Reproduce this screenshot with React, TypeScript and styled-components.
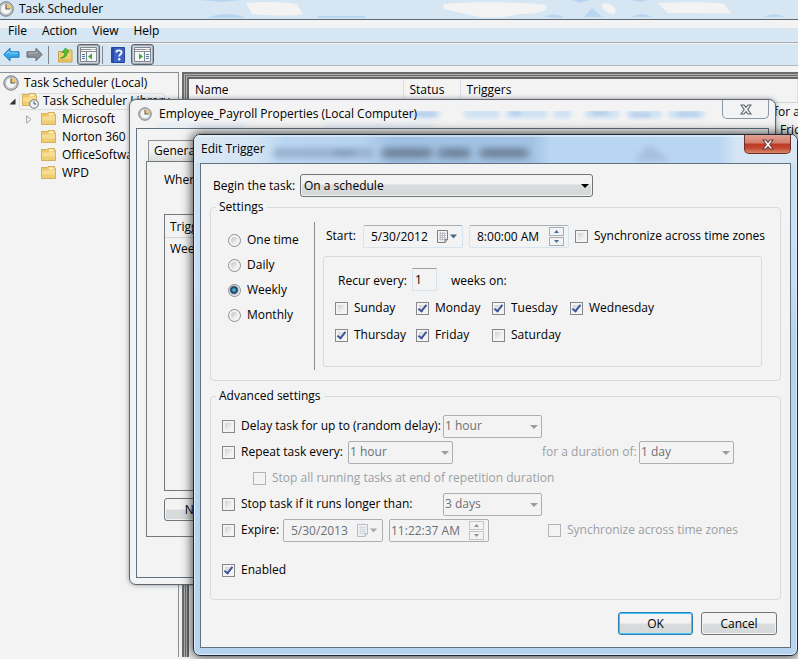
import React, { useState } from 'react';
import styled, { createGlobalStyle, css } from 'styled-components';

const Global = createGlobalStyle`
  *, *::before, *::after { box-sizing: border-box; }
  html, body { margin: 0; padding: 0; overflow: hidden; background: #f3f3f3; }
  body, button, input, select, table {
    font-family: "Open Sans", "Noto Sans", sans-serif;
    font-size: 12px;
    line-height: 18px;
    color: #000;
  }
`;

/* ---------- main window ---------- */

const Desktop = styled.main`
  position: relative;
  display: flex;
  flex-direction: column;
  min-height: 100vh;
  padding-bottom: 2px;
  overflow: hidden;
  background: #f3f3f3;
  white-space: nowrap;
`;

const TitleBar = styled.header`
  position: relative;
  display: flex;
  align-items: center;
  height: 20px;
  padding-bottom: 2px;
  gap: 5px;
  background: #d6e6f3;
  border-bottom: 1px solid #5d6a75;
`;

const Backdrop = styled.svg`
  position: absolute;
  inset: 0;
  width: 100%;
  height: 100%;
`;

const WindowName = styled.h1`
  position: relative;
  margin: 0;
  font-size: 12px;
  font-weight: 400;
`;

const AppMark = styled.span`
  position: relative;
  display: flex;
  margin-left: -2px;
`;

const MenuBar = styled.nav`
  display: flex;
  height: 23px;
  padding-left: 8px;
  gap: 15px;
  background: linear-gradient(#f3f3f3 8px, #d6e6f3 8px);
  border-bottom: 1px solid #a7abb0;
`;

const MenuItem = styled.button`
  padding: 0;
  border: 0;
  background: none;
`;

const ToolBar = styled.div`
  display: flex;
  align-items: center;
  height: 23px;
  padding-left: 3px;
  border-top: 1px solid #f3f3f3;
  border-bottom: 1px solid #b3b8bf;
  background: #d6e6f3;
`;

const ToolButton = styled.button<{ $on?: boolean; $gap?: number }>`
  display: flex;
  align-items: center;
  justify-content: center;
  height: 21px;
  padding: 0;
  margin-left: ${p => p.$gap ?? 0}px;
  border: 0;
  background: none;
  ${p => p.$on && css`
    width: 23px;
    border: 1px solid #5b6573;
    border-radius: 3px;
    background: #d4d9dd;
    box-shadow: inset 0 0 0 1px #a3a9b3;
  `}
`;

const ToolRule = styled.span<{ $gap: number }>`
  width: 1px;
  height: 18px;
  margin-left: ${p => p.$gap}px;
  background: #7f868e;
`;

const Workspace = styled.div`
  display: flex;
  flex: 1;
  gap: 3px;
  padding-top: 6px;
`;

const TreePane = styled.aside`
  flex: 0 0 179px;
  overflow: hidden;
  border-top: 1px solid #8a8f94;
  border-right: 1px solid #8a8f94;
`;

const Tree = styled.ul`
  margin: 0;
  padding: 1px 0 0;
  list-style: none;
`;

const Twisty = styled.span`
  display: flex;
  flex: 0 0 12px;
  justify-content: center;
`;

const TreeRow = styled.li<{ $depth: number }>`
  display: flex;
  align-items: center;
  height: 18px;
  gap: ${p => (p.$depth === 2 ? 6 : 5)}px;
  padding-left: ${p => [3, 6, 23][p.$depth]}px;
  svg { flex: none; }
`;

const TreePick = styled.span`
  display: flex;
  align-items: center;
  height: 17px;
  width: 146px;
  margin-left: -4px;
  padding-left: 2px;
  gap: 4px;
  border: 1px solid #dcdfe2;
  border-radius: 3px;
`;

const ListPane = styled.section`
  flex: 1;
  min-width: 0;
  border-style: solid;
  border-color: #6b6b6b;
  border-width: 2px 0 0 2px;
  box-shadow: inset 1px 1px 0 #b0b0b0, inset 2px 2px 0 #6b6b6b, inset 3px 3px 0 #b0b0b0, inset 5px 5px 0 #666;
  padding: 5px 0 0 5px;
  overflow: hidden;
`;

const TaskTable = styled.table`
  width: 100%;
  table-layout: fixed;
  border-collapse: collapse;
  th, td {
    height: 18px;
    padding: 0 0 0 6px;
    text-align: left;
    font-weight: 400;
    overflow: hidden;
  }
  th {
    height: 23px;
    border-right: 1px solid #d6dfe8;
    border-bottom: 1px solid #cfd3d6;
  }
  th:nth-child(1) { width: 214px; }
  th:nth-child(2) { width: 57px; }
`;

const TriggerCell = styled.td<{ $lead: number }>`
  && { padding-left: ${p => p.$lead}px; }
`;

/* ---------- dialogs ---------- */

const Frame = styled.section<{ $front?: boolean }>`
  position: absolute;
  display: flex;
  flex-direction: column;
  overflow: hidden;
  ${p => p.$front
    ? css`
        left: 193px;
        right: 0;
        top: 134px;
        padding: 0 6px 7px;
        border: 1px solid #1e2832;
        border-radius: 7px;
        background: linear-gradient(#cfe2f5, #c5dcf3 150px, #b6d2ef 200px, #b6d4f1);
        box-shadow: inset 0 0 0 1px #e3eef9, 0 0 11px 1px rgba(0, 0, 0, 0.75);
      `
    : css`
        left: 129px;
        right: 22px;
        top: 99px;
        padding: 0 6px 6px;
        border: 1px solid #60666c;
        border-radius: 7px;
        background: #f3f3f3;
        box-shadow: 0 0 5px rgba(60, 70, 80, 0.55);
      `}
`;

const FrameTitle = styled.header<{ $front?: boolean }>`
  position: relative;
  display: flex;
  align-items: center;
  height: 28px;
  gap: 7px;
  padding-left: ${p => (p.$front ? 7 : 4)}px;
  margin: ${p => (p.$front ? '0 -6px' : '0')};
`;

const CloseButton = styled.button<{ $front?: boolean }>`
  position: relative;
  display: flex;
  align-items: center;
  justify-content: center;
  align-self: flex-start;
  width: 47px;
  height: 19px;
  padding: 0;
  margin-left: auto;
  margin-right: ${p => (p.$front ? 6 : 0)}px;
  border: 1px solid ${p => (p.$front ? '#6b2f2a' : '#8b98a4')};
  border-top: 0;
  border-radius: 0 0 5px 5px;
  background: ${p => p.$front
    ? 'linear-gradient(#e0a193, #d3806f 8px, #bd3a25 9px, #c2472f 13px, #d98a6c)'
    : 'none'};
`;

const Client = styled.div<{ $front?: boolean }>`
  display: flex;
  flex-direction: column;
  border: 1px solid #61717f;
  background: #f3f3f3;
  padding: ${p => (p.$front ? '9px 9px 12px' : '11px 9px 40px')};
`;

const TabStrip = styled.div`
  display: flex;
  padding-left: 2px;
`;

const Tab = styled.button`
  height: 21px;
  padding: 0 5px;
  border: 1px solid #8b9096;
  border-bottom: 0;
  background: linear-gradient(#f3f3f3 10px, #d9dcdc);
`;

const TabPage = styled.div`
  border: 1px solid #74797e;
  padding: 9px 17px 15px;
`;

const Caption = styled.p`
  margin: 0 0 25px;
`;

const TriggerTable = styled.table`
  width: 100%;
  margin-bottom: 7px;
  border: 1px solid #74797e;
  border-collapse: separate;
  border-spacing: 0;
  th, td {
    padding: 0 5px;
    text-align: left;
    vertical-align: top;
    font-weight: 400;
  }
  th { height: 23px; padding-top: 3px; border-bottom: 1px solid #d3d7da; }
  td { height: 252px; padding-top: 2px; }
`;

const PushButton = styled.button<{ $primary?: boolean }>`
  width: ${p => (p.$primary ? 75 : 76)}px;
  height: 23px;
  padding: 0;
  border: 1px solid ${p => (p.$primary ? '#2f7fb5' : '#71767b')};
  border-radius: 3px;
  background: linear-gradient(#f3f3f3 10px, #d9dcdc 11px, #d5d9d9);
  box-shadow: inset 0 0 0 1px ${p => (p.$primary ? '#43c6f5' : '#f3f3f3')};
`;

/* ---------- form parts ---------- */

const Line = styled.div<{ $indent?: number; $tall?: boolean }>`
  display: flex;
  align-items: center;
  height: ${p => (p.$tall ? 25 : 22)}px;
  padding-left: ${p => p.$indent ?? 0}px;
`;

const Cell = styled.div<{ $w: number }>`
  display: flex;
  align-items: center;
  flex: 0 0 ${p => p.$w}px;
  min-width: 0;
`;

const Group = styled.fieldset<{ $gap: number }>`
  min-width: 0;
  margin: 0 0 ${p => p.$gap}px;
  padding: 0 0 0 11px;
  border: 1px solid #d7dbdc;
  border-radius: 4px;
`;

const GroupName = styled.legend`
  height: 18px;
  margin-left: -6px;
  padding: 0 3px;
`;

const Pair = styled.label<{ $off?: boolean }>`
  display: flex;
  align-items: center;
  gap: 6px;
  color: ${p => (p.$off ? '#9b9fa6' : '#000')};
`;

const Box = styled.input`
  appearance: none;
  flex: none;
  position: relative;
  width: 13px;
  height: 13px;
  margin: 0;
  border: 1px solid #85898e;
  background: linear-gradient(135deg, #cdd3d5, #f3f3f3 80%) content-box, #f3f3f3;
  padding: 2px;
  &:disabled { border-color: #b1b5b8; background: #f3f3f3; }
  &:checked::after {
    content: "";
    position: absolute;
    left: 3px;
    top: 0;
    width: 5px;
    height: 9px;
    border: solid #3f559b;
    border-width: 0 2px 2px 0;
    transform: rotate(38deg);
  }
`;

const Dot = styled.input`
  appearance: none;
  flex: none;
  width: 13px;
  height: 13px;
  margin: 0;
  border: 1px solid #8a8e93;
  border-radius: 50%;
  background: linear-gradient(135deg, #bcc1c4, #f3f3f3 80%) content-box, #f3f3f3;
  padding: 2px;
  &:checked {
    background: radial-gradient(circle at 5px 5px, #7fd0ee 0, #2878a8 2px, #14364f 3px, #e6eaec 5px);
  }
`;

const Drop = styled.span<{ $w: number; $off?: boolean }>`
  position: relative;
  flex: 0 0 ${p => p.$w}px;
  display: flex;
  &::after {
    content: "";
    position: absolute;
    right: 4px;
    top: 10px;
    border: solid transparent;
    border-width: 4px 4px 0;
    border-top-color: ${p => (p.$off ? '#999da0' : '#000')};
    pointer-events: none;
  }
`;

const Picker = styled.select`
  appearance: none;
  width: 100%;
  height: 23px;
  padding: 0 16px 0 3px;
  border: 1px solid #6f7479;
  border-radius: 3px;
  background: linear-gradient(#f3f3f3 9px, #d9dcdc 10px, #d5d9d9);
  box-shadow: inset 0 0 0 1px #f3f3f3;
  opacity: 1;
  &:disabled {
    padding-left: 1px;
    color: #6d7075;
    border-color: #abafb2;
    border-radius: 2px;
    background: #f3f3f3;
  }
`;

const Field = styled.span<{ $off?: boolean }>`
  display: flex;
  align-items: center;
  width: 100px;
  height: 23px;
  padding-right: 4px;
  border: 1px solid ${p => (p.$off ? '#abafb2' : '#d6e4f0')};
  border-top-color: #abafb2;
  border-radius: 2px;
  svg { flex: none; }
`;

const FieldText = styled.input<{ $pad: number }>`
  flex: 1;
  min-width: 0;
  height: 20px;
  padding: 0 0 0 ${p => p.$pad}px;
  border: 0;
  background: none;
  outline: 0;
  &:disabled { color: #6d7075; }
`;

const IconButton = styled.button`
  display: flex;
  padding: 0;
  border: 0;
  background: none;
`;

const Spin = styled.span`
  display: flex;
  flex-direction: column;
  gap: 1px;
`;

const SpinButton = styled.button<{ $off?: boolean }>`
  display: flex;
  align-items: center;
  justify-content: center;
  width: 15px;
  height: 9px;
  padding: 0;
  border: 1px solid ${p => (p.$off ? '#c3c7ca' : '#a9adb1')};
  background: #f3f3f3;
`;

const CountInput = styled.input`
  width: 25px;
  height: 23px;
  margin-bottom: 4px;
  padding: 0 2px;
  border: 1px solid #d6e4f0;
  border-top-color: #9da1a5;
  background: none;
`;

const Split = styled.div`
  display: flex;
  padding: 6px 18px 10px 0;
`;

const Choices = styled.div`
  display: flex;
  flex-direction: column;
  flex: 0 0 93px;
  gap: 7px;
  padding: 9px 0 0 6px;
  border-right: 1px solid #8b8f93;
`;

const Detail = styled.div`
  flex: 1;
  min-width: 0;
  padding: 3px 0 3px 9px;
`;

const RecurBox = styled.div`
  margin: 9px 0 0 -1px;
  padding: 13px 0 22px 12px;
  border: 1px solid #d7dbdc;
  border-radius: 3px;
`;

const Days = styled.div`
  display: grid;
  grid-template-columns: 81px 76px 78px auto;
  row-gap: 9px;
  justify-content: start;
  padding-top: 7px;
  margin-left: -1px;
`;

const Options = styled.div`
  display: flex;
  flex-direction: column;
  gap: 4px;
  padding: 10px 0 18px;
`;

const Spacer = styled.div`
  height: 10px;
`;

const Actions = styled.footer`
  display: flex;
  justify-content: flex-end;
  gap: 8px;
  padding-right: 4px;
`;

/* ---------- drawings ---------- */

const ClockIcon = ({ size = 16 }: { size?: number }) => (
  <svg width={size} height={size} viewBox="0 0 16 16" aria-hidden="true">
    <circle cx="8" cy="8" r="7.2" fill="#c3c8cc" stroke="#777d83" />
    <circle cx="8" cy="8" r="5.5" fill="#f5f6f6" stroke="#9aa0a5" strokeWidth=".6" />
    <path d="M8 8V2.700A5.300 5.300 0 0 1 13.300 8Z" fill="#f5c56a" />
    <path d="M8 3.500V8H12" fill="none" stroke="#50606f" strokeWidth="1.2" />
  </svg>
);

const FolderIcon = ({ clock }: { clock?: boolean }) => (
  <svg width={clock ? 17 : 15} height={clock ? 16 : 14} viewBox={clock ? '0 0 17 16' : '0 0 15 14'} aria-hidden="true">
    <path d="M.5 1.500H6L7 .500H13.500V2.500H14.500V12.500H.500Z" fill="#ecc869" stroke="#cfa548" strokeWidth=".8" />
    <path d="M8 1.500H12.500V3H8Z" fill="#fff7dc" />
    <path d="M1 4.500H6L7.500 3.500H14V12H1Z" fill="#f6dc8f" />
    <path d="M1 8.500H14V12H1Z" fill="#efcd73" />
    {clock && (
      <g>
        <circle cx="12" cy="11" r="4.300" fill="#eef1f3" stroke="#6d757c" />
        <path d="M12 8.300V11H14.200" fill="none" stroke="#46535f" />
      </g>
    )}
  </svg>
);

const ArrowIcon = ({ back }: { back?: boolean }) => (
  <svg width="17" height="15" viewBox="0 0 17 15" aria-hidden="true">
    {back ? (
      <path d="M.8 7.500 7 1.300V4.800H16V10.200H7V13.700Z" fill="#35a8ea" stroke="#1b74b8" />
    ) : (
      <path d="M16.200 7.500 10 1.300V4.800H1V10.200H10V13.700Z" fill="#8d9195" stroke="#66696d" />
    )}
    {back ? <path d="M3 7 6 4.200V6H15" fill="none" stroke="#8ed6fa" /> : <path d="M2 6H11V4" fill="none" stroke="#b5b8bb" />}
  </svg>
);

const UpFolderIcon = () => (
  <svg width="15" height="16" viewBox="0 0 15 16" aria-hidden="true">
    <path d="M.5 4.500H6L7.500 3H14V15H.500Z" fill="#f0cf79" stroke="#c9a148" />
    <path d="M1 12H13.500V14.500H1Z" fill="#e5bd5c" />
    <path d="M2.500 11C6 10 7 8 6.500 5.500H4L7.500 1 11 5H9C9.500 9 6.500 11.500 2.500 11Z" fill="#52c234" stroke="#2f8d1d" strokeWidth=".7" />
  </svg>
);

const PaneIcon = ({ right }: { right?: boolean }) => (
  <svg width="17" height="15" viewBox="0 0 17 15" aria-hidden="true">
    <path d="M.5 .500H16.500V14.500H.500Z" fill="#f6f6f6" stroke="#80868c" />
    <path d="M1 2.500H16M1 4.500H16" stroke="#8a9096" />
    <path d="M11.500 2.500H15.500" stroke="#fff" strokeDasharray="1 1" />
    {right ? (
      <g>
        <path d="M12 7.500H15M12 9.500H15M12 11.500H15" stroke="#4b79a8" />
        <path d="M10.500 5V14" stroke="#80868c" />
        <path d="M5 6.500 9 9.500 5 12.500Z" fill="#36a83a" />
      </g>
    ) : (
      <g>
        <path d="M2 7.500H5M2 9.500H5M2 11.500H5" stroke="#4b79a8" />
        <path d="M6.500 5V14" stroke="#80868c" />
        <path d="M12 6.500 8 9.500 12 12.500Z" fill="#36a83a" />
      </g>
    )}
  </svg>
);

const HelpIcon = () => (
  <svg width="14" height="16" viewBox="0 0 14 16" aria-hidden="true">
    <path d="M.5 .500H13.500V15.500H.500Z" fill="#3b62c4" stroke="#27439b" />
    <path d="M1 1H3V15H1Z" fill="#2a4aa8" />
    <path d="M5.300 5.600C5.300 2.500 10.700 2.600 10.600 5.500 10.500 7.400 8.200 7.300 8.200 9.600" fill="none" stroke="#fff" strokeWidth="1.800" />
    <circle cx="8.200" cy="12.300" r="1.200" fill="#fff" />
  </svg>
);

const CrossIcon = ({ line }: { line: string }) => (
  <svg width="12" height="11" viewBox="0 0 12 11" aria-hidden="true">
    <path d="M1 1H4L6 3.300 8 1H11L7.800 5.500 11 10H8L6 7.700 4 10H1L4.200 5.500Z" fill="#f5f5f5" stroke={line} strokeWidth="1.100" />
  </svg>
);

const CalendarIcon = ({ off }: { off?: boolean }) => (
  <svg width="21" height="13" viewBox="0 0 21 13" aria-hidden="true">
    <path d="M.5 .500H10.500V9.500L8 12.500H.500Z" fill="#f3f3f3" stroke={off ? '#b5bcc4' : '#7b7f84'} />
    <path d="M2 3.500H9M2 5.500H9M2 7.500H9M2 9.500H8M3.500 2V10.500M5.500 2V10.500M7.500 2V10.500" stroke={off ? '#cfd8e2' : '#b4b8bd'} strokeWidth=".8" />
    <path d="M8 12.500V9.500H10.500" fill="none" stroke={off ? '#b5bcc4' : '#7b7f84'} />
    <path d="M13 4.500H20L16.500 8.500Z" fill={off ? '#a6aaad' : '#4a6484'} />
  </svg>
);

const Tip = ({ up, off }: { up?: boolean; off?: boolean }) => (
  <svg width="5" height="3" viewBox="0 0 5 3" aria-hidden="true">
    <path d={up ? 'M0 3 2.500 0 5 3Z' : 'M0 0H5L2.500 3Z'} fill={off ? '#8f9397' : '#4a6ba0'} />
  </svg>
);

const MainGlass = () => (
  <Backdrop viewBox="0 0 798 19" preserveAspectRatio="none" aria-hidden="true">
    <path d="M246 3C260 1 290 2 297 4L303 14C290 17 268 15 252 14Z M443 4C470 1 530 2 546 5 548 12 538 14 520 14 500 19 480 18 470 15L444 9Z M602 4C610 2 618 8 615 14 608 14 601 9 602 4Z M658 3C680 2 715 2 724 4L731 13C712 14 685 13 668 13Z" fill="#f3f3f3" />
    <path d="M210 17C224 12 236 14 246 18H206Z M318 16H365V18H318Z M544 17C552 13 560 14 564 18Z M584 17 592 8 602 17Z M632 17C640 12 646 14 652 17Z M764 17C772 13 780 14 784 17Z M572 0H590L580 3Z M630 0H648L640 2Z M200 0H242L222 2Z" fill="#b9d6f1" />
  </Backdrop>
);

const SoftGlass = () => (
  <Backdrop viewBox="0 0 637 28" preserveAspectRatio="none" aria-hidden="true">
    <defs><filter id="soft"><feGaussianBlur stdDeviation="2" /></filter></defs>
    <g filter="url(#soft)">
      <path d="M278 14H302 M334 14H362 M376 14H410 M424 14H434 M456 14H482 M498 14H525 M540 14H568" stroke="#cfe2f4" strokeWidth="9" strokeLinecap="round" />
      <path d="M284 14H300 M378 13H386 M460 13H474 M500 15H516 M546 14H564" stroke="#adc8e8" strokeWidth="4" strokeLinecap="round" />
      <path d="M20 26H110 M190 26H300" stroke="#d8e7f5" strokeWidth="3" />
    </g>
  </Backdrop>
);

const FrontGlass = () => (
  <Backdrop viewBox="0 0 603 28" preserveAspectRatio="none" aria-hidden="true">
    <defs>
      <filter id="haze"><feGaussianBlur stdDeviation="3" /></filter>
      <linearGradient id="sky">
        <stop offset="0" stopColor="#dbe8f4" /><stop offset=".1" stopColor="#d3e4f4" />
        <stop offset=".15" stopColor="#bbd6f2" /><stop offset=".28" stopColor="#b5d2ef" />
        <stop offset=".33" stopColor="#a1c1e2" /><stop offset=".56" stopColor="#a3c2e3" />
        <stop offset=".59" stopColor="#b8d5f2" /><stop offset=".87" stopColor="#b8d5f2" />
        <stop offset=".9" stopColor="#d5e5f4" /><stop offset="1" stopColor="#d9e7f4" />
      </linearGradient>
    </defs>
    <path d="M0 0H603V28H0Z" fill="url(#sky)" />
    <g filter="url(#haze)" strokeLinecap="round">
      <path d="M84 18H175" stroke="#98b0ce" strokeWidth="10" />
      <path d="M192 18H234 M248 18H272 M290 18H330" stroke="#7890ac" strokeWidth="11" />
      <path d="M196 18H230 M254 18H270 M294 18H326" stroke="#68798d" strokeWidth="4" />
      <path d="M142 18H158" stroke="#7d96b5" strokeWidth="5" />
      <path d="M440 26 455 10 476 26Z" fill="#a7bddb" />
    </g>
    <path d="M1 1H602" stroke="#edf4fb" />
  </Backdrop>
);

/* ---------- composed parts ---------- */

const Check = ({ label, on = false, off = false }: { label: string; on?: boolean; off?: boolean }) => (
  <Pair $off={off}>
    <Box type="checkbox" defaultChecked={on} disabled={off} />
    {label}
  </Pair>
);

const Choose = ({ name, value, w, off }: { name: string; value: string; w: number; off?: boolean }) => (
  <Drop $w={w} $off={off}>
    <Picker aria-label={name} disabled={off} defaultValue={value}>
      <option>{value}</option>
    </Picker>
  </Drop>
);

const DateField = ({ name, value, off }: { name: string; value: string; off?: boolean }) => (
  <Field $off={off}>
    <FieldText $pad={7} aria-label={name} defaultValue={value} disabled={off} />
    <IconButton type="button" aria-label="Open calendar" disabled={off}><CalendarIcon off={off} /></IconButton>
  </Field>
);

const TimeField = ({ name, value, off }: { name: string; value: string; off?: boolean }) => (
  <Field $off={off}>
    <FieldText $pad={off ? 1 : 7} aria-label={name} defaultValue={value} disabled={off} />
    <Spin>
      <SpinButton type="button" aria-label="Later" $off={off} disabled={off}><Tip up off={off} /></SpinButton>
      <SpinButton type="button" aria-label="Earlier" $off={off} disabled={off}><Tip off={off} /></SpinButton>
    </Spin>
  </Field>
);

const periods = ['One time', 'Daily', 'Weekly', 'Monthly'];
const weekDays: [string, boolean][] = [
  ['Sunday', false], ['Monday', true], ['Tuesday', true], ['Wednesday', true],
  ['Thursday', true], ['Friday', true], ['Saturday', false],
];

const EditTrigger = () => {
  const [period, setPeriod] = useState('Weekly');
  return (
    <Frame $front role="dialog" aria-label="Edit Trigger">
      <FrameTitle $front>
        <FrontGlass />
        <WindowName as="h2">Edit Trigger</WindowName>
        <CloseButton $front type="button" aria-label="Close"><CrossIcon line="#6b3f3f" /></CloseButton>
      </FrameTitle>
      <Client $front>
        <Line $indent={3} $tall>
          <Cell $w={87}>Begin the task:</Cell>
          <Choose name="Begin the task" value="On a schedule" w={293} />
        </Line>
        <Group $gap={6}>
          <GroupName>Settings</GroupName>
          <Split>
            <Choices>
              {periods.map(p => (
                <Pair key={p}>
                  <Dot type="radio" name="period" checked={period === p} onChange={() => setPeriod(p)} />
                  {p}
                </Pair>
              ))}
            </Choices>
            <Detail>
              <Line $indent={2}>
                <Cell $w={37}>Start:</Cell>
                <Cell $w={106}><DateField name="Start date" value="5/30/2012" /></Cell>
                <Cell $w={106}><TimeField name="Start time" value="8:00:00 AM" /></Cell>
                <Check label="Synchronize across time zones" />
              </Line>
              <RecurBox>
                <Line $indent={2}>
                  <Cell as="label" htmlFor="weeks" $w={74}>Recur every:</Cell>
                  <Cell $w={39}><CountInput id="weeks" defaultValue="1" /></Cell>
                  weeks on:
                </Line>
                <Days>
                  {weekDays.map(([d, on]) => <Check key={d} label={d} on={on} />)}
                </Days>
              </RecurBox>
            </Detail>
          </Split>
        </Group>
        <Group $gap={12}>
          <GroupName>Advanced settings</GroupName>
          <Options>
            <Line>
              <Cell $w={221}><Check label="Delay task for up to (random delay):" /></Cell>
              <Choose name="Delay" value="1 hour" w={99} off />
            </Line>
            <Line>
              <Cell $w={126}><Check label="Repeat task every:" /></Cell>
              <Cell $w={194}><Choose name="Repeat interval" value="1 hour" w={105} off /></Cell>
              <Cell $w={97}><Pair as="span" $off>for a duration of:</Pair></Cell>
              <Choose name="Duration" value="1 day" w={95} off />
            </Line>
            <Line $indent={31}>
              <Check label="Stop all running tasks at end of repetition duration" off />
            </Line>
            <Line>
              <Cell $w={221}><Check label="Stop task if it runs longer than:" /></Cell>
              <Choose name="Time limit" value="3 days" w={99} off />
            </Line>
            <Line>
              <Cell $w={61}><Check label="Expire:" /></Cell>
              <Cell $w={106}><DateField name="Expiry date" value="5/30/2013" off /></Cell>
              <Cell $w={159}><TimeField name="Expiry time" value="11:22:37 AM" off /></Cell>
              <Check label="Synchronize across time zones" off />
            </Line>
            <Spacer />
            <Line><Check label="Enabled" on /></Line>
          </Options>
        </Group>
        <Actions>
          <PushButton $primary type="button">OK</PushButton>
          <PushButton type="button">Cancel</PushButton>
        </Actions>
      </Client>
    </Frame>
  );
};

const Properties = () => (
  <Frame role="dialog" aria-label="Employee_Payroll Properties">
    <FrameTitle>
      <SoftGlass />
      <AppMark><ClockIcon size={14} /></AppMark>
      <WindowName as="h2">Employee_Payroll Properties (Local Computer)</WindowName>
      <CloseButton type="button" aria-label="Close properties"><CrossIcon line="#59616a" /></CloseButton>
    </FrameTitle>
    <Client>
      <TabStrip><Tab type="button">General</Tab></TabStrip>
      <TabPage>
        <Caption>When</Caption>
        <TriggerTable>
          <thead><tr><th>Trigger</th></tr></thead>
          <tbody><tr><td>Weekly</td></tr></tbody>
        </TriggerTable>
        <PushButton type="button">New...</PushButton>
      </TabPage>
    </Client>
  </Frame>
);

const folders = ['Microsoft', 'Norton 360', 'OfficeSoftware', 'WPD'];

export default function App() {
  return (
    <>
      <Global />
      <Desktop>
        <TitleBar>
          <MainGlass />
          <AppMark><ClockIcon /></AppMark>
          <WindowName>Task Scheduler</WindowName>
        </TitleBar>
        <MenuBar>
          {['File', 'Action', 'View', 'Help'].map(m => <MenuItem key={m} type="button">{m}</MenuItem>)}
        </MenuBar>
        <ToolBar>
          <ToolButton type="button" aria-label="Back"><ArrowIcon back /></ToolButton>
          <ToolButton type="button" aria-label="Forward" $gap={6}><ArrowIcon /></ToolButton>
          <ToolRule $gap={5} />
          <ToolButton type="button" aria-label="Up one level" $gap={9}><UpFolderIcon /></ToolButton>
          <ToolButton type="button" aria-label="Console tree" $on $gap={4}><PaneIcon /></ToolButton>
          <ToolRule $gap={2} />
          <ToolButton type="button" aria-label="Help" $gap={8}><HelpIcon /></ToolButton>
          <ToolButton type="button" aria-label="Action pane" $on $gap={6}><PaneIcon right /></ToolButton>
        </ToolBar>
        <Workspace>
          <TreePane>
            <Tree>
              <TreeRow $depth={0}><ClockIcon />Task Scheduler (Local)</TreeRow>
              <TreeRow $depth={1}>
                <Twisty>
                  <svg width="7" height="7" viewBox="0 0 7 7" aria-hidden="true"><path d="M6.500 .500V6.500H.500Z" fill="#333" /></svg>
                </Twisty>
                <TreePick><FolderIcon clock />Task Scheduler Library</TreePick>
              </TreeRow>
              {folders.map((f, i) => (
                <TreeRow key={f} $depth={2}>
                  <Twisty>
                    {i === 0 && (
                      <svg width="6" height="9" viewBox="0 0 6 9" aria-hidden="true"><path d="M.7 .900 5 4.500 .700 8.100Z" fill="#f8f8f8" stroke="#9a9ea2" /></svg>
                    )}
                  </Twisty>
                  <FolderIcon />{f}
                </TreeRow>
              ))}
            </Tree>
          </TreePane>
          <ListPane>
            <TaskTable>
              <thead><tr><th>Name</th><th>Status</th><th>Triggers</th></tr></thead>
              <tbody>
                <tr><td /><td /><TriggerCell $lead={314}>for a</TriggerCell></tr>
                <tr><td /><td /><TriggerCell $lead={320}>Fric</TriggerCell></tr>
              </tbody>
            </TaskTable>
          </ListPane>
        </Workspace>
        <Properties />
        <EditTrigger />
      </Desktop>
    </>
  );
}
